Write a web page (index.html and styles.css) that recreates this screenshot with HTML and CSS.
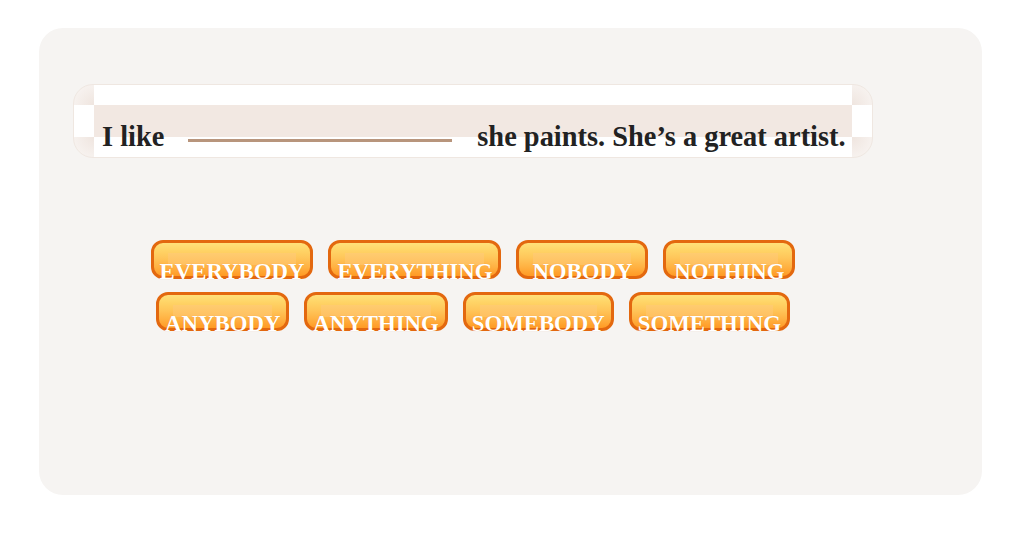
FILE: index.html
```html
<!DOCTYPE html>
<html>
<head>
<meta charset="utf-8">
<link rel="stylesheet" href="styles.css">
</head>
<body>
<div class="card">
  <div class="sentence"><span class="words">I like</span><span class="blank"></span><span class="words">she paints. She’s a great artist.</span></div>
  <div class="choices">
    <div class="row">
      <button class="word">EVERYBODY</button>
      <button class="word">EVERYTHING</button>
      <button class="word">NOBODY</button>
      <button class="word">NOTHING</button>
    </div>
    <div class="row">
      <button class="word">ANYBODY</button>
      <button class="word">ANYTHING</button>
      <button class="word">SOMEBODY</button>
      <button class="word">SOMETHING</button>
    </div>
  </div>
</div>
</body>
</html>
```

FILE: styles.css
```css
html, body {
  margin: 0;
  padding: 0;
  background: #ffffff;
}

body {
  font-family: "Liberation Serif", "Times New Roman", serif;
}

.card {
  box-sizing: border-box;
  margin: 28px 0 0 39px;
  width: 943px;
  height: 467px;
  border-radius: 24px;
  background: #f6f4f2;
  padding: 56px 0 0 34px;
}

.sentence {
  box-sizing: border-box;
  width: 800px;
  height: 74px;
  border: 1px solid #efe7e1;
  border-radius: 20px;
  padding: 38px 0 0 28px;
  font-size: 28.4px;
  line-height: 28px;
  font-weight: bold;
  color: #222222;
  white-space: nowrap;
  background:
    radial-gradient(circle at 100% 100%, #efe5df 0, #f7f2ef 21px) 0 0 / 20px 20px no-repeat,
    radial-gradient(circle at 0 100%, #efe5df 0, #f7f2ef 21px) 100% 0 / 20px 20px no-repeat,
    radial-gradient(circle at 100% 0, #efe5df 0, #f7f2ef 21px) 0 100% / 20px 20px no-repeat,
    radial-gradient(circle at 0 0, #efe5df 0, #f7f2ef 21px) 100% 100% / 20px 20px no-repeat,
    linear-gradient(#f2e8e2, #f2e8e2) 20px 20px / calc(100% - 40px) 32px no-repeat,
    #ffffff;
}

.blank {
  display: inline-block;
  width: 264px;
  height: 3px;
  margin: 0 25px 0 24px;
  background: #b8957c;
  vertical-align: 4px;
}

.choices {
  width: 800px;
  margin-top: 82px;
  display: flex;
  flex-direction: column;
  gap: 13px;
}

.row {
  display: flex;
  justify-content: center;
  gap: 15px;
}

.word {
  box-sizing: border-box;
  height: 39px;
  min-width: 132px;
  padding: 18px 6px 0;
  border: 3px solid #e3680f;
  border-radius: 12px;
  font-family: "Liberation Serif", "Times New Roman", serif;
  font-weight: bold;
  font-size: 22.8px;
  line-height: 22px;
  color: #ffffff;
  white-space: nowrap;
  overflow: visible;
  text-shadow: 0 0 1px rgba(200, 90, 0, 0.3);
  background:
    linear-gradient(#ffcc70, #ffc060) 14px 10px / calc(100% - 28px) 12px no-repeat,
    linear-gradient(to bottom, #ffe07a 0%, #ffd466 22%, #ffc65a 45%, #ffb243 72%, #ff9a24 100%);
  cursor: pointer;
}
```
